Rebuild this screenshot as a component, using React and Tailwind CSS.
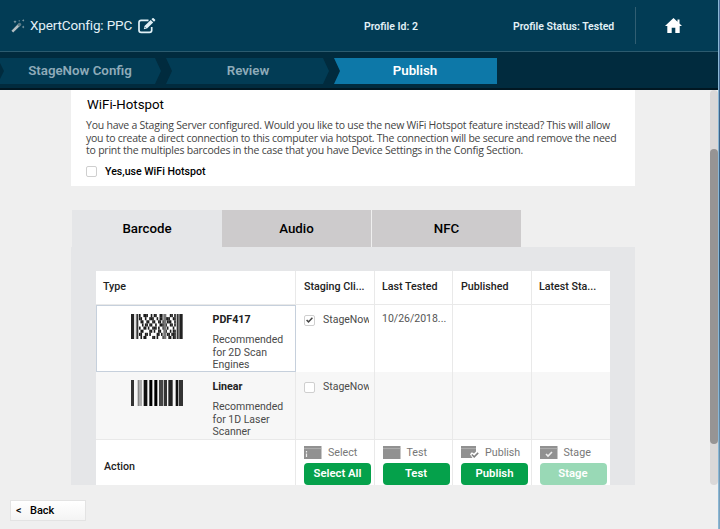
import React from "react";

function Wand() {
  return (
    <svg className="h-[14px] w-[14px]" viewBox="0 0 14 14">
      <path d="M1.3 12.6 9 5" stroke="#b4bec2" strokeWidth="2.5" />
      <path d="M7.2 6.8 9.6 4.4" stroke="#5f7c86" strokeWidth="2.5" />
      <g fill="#8fa5ad">
        <path d="M4 1.2l.5 1.1 1.1.5-1.1.5L4 4.4l-.5-1.1-1.1-.5 1.1-.5zM12.2 0l.4 1 .9.4-.9.4-.4 1-.4-1-.9-.4.9-.4zM12.2 6.6l.4 1 .9.4-.9.4-.4 1-.4-1-.9-.4.9-.4z" />
        <circle cx="8.2" cy="1.8" r=".6" />
      </g>
    </svg>
  );
}

function EditIcon() {
  return (
    <svg className="h-4 w-[18px]" viewBox="0 0 18 16" fill="none">
      <path d="M10.5 2.3H3.2A2.2 2.2 0 0 0 1 4.500v7.700A2.200 2.200 0 0 0 3.200 14.400h8.300a2.200 2.200 0 0 0 2.200-2.200V9" stroke="#e2f1f7" strokeWidth="1.700" />
      <path d="M5.800 11.300l.7-3.200 6.200-6.200 2.500 2.500L9 10.600z" fill="#e2f1f7" />
      <path d="M13.500 1.200l1-1a.8.8 0 0 1 1.100 0l1.400 1.400a.8.8 0 0 1 0 1.100l-1 1z" fill="#e2f1f7" />
      <path d="M6.800 9.100l1.200 1.200" stroke="#023c55" strokeWidth=".8" />
    </svg>
  );
}

function Home() {
  return (
    <svg className="h-[15px] w-[17px]" viewBox="0 0 17 15">
      <path d="M8.500 0 0 8h2.300v7h4.400V9.700h3.600V15h4.400V8H17l-2.500-2.400V1.500h-2v2.200z" fill="#fff" />
    </svg>
  );
}

function Chevron() {
  return (
    <svg className="block h-[26px] w-[18px] shrink-0" viewBox="0 0 18 26">
      <path d="M0 0h11l6 13-6 13H0l6-13z" fill="#012b3e" />
    </svg>
  );
}

const LINEAR = [[0, 9, "#333"], [20, 6, "#888"], [28, 4, "#888"], [38, 11, "#111"], [55, 9, "#000"], [70, 9, "#000"], [84, 12, "#444"], [98, 10, "#333"], [112, 13, "#222"], [134, 8, "#111"], [144, 12, "#333"]];

function LinearCode() {
  return (
    <svg className="block h-[26px] w-[52px]" viewBox="0 0 156 78">
      {LINEAR.map(([x, w, c]) => (
        <rect key={x} x={x} y="0" width={w} height="78" fill={c} />
      ))}
    </svg>
  );
}

const PDF_ROWS = [
  "1001110010110011010001101",
  "1100100111001011001110011",
  "0110011001100110100111001",
  "0010110110010011101001101",
  "1001101001110100110100010",
  "0110000110100110011001011",
  "1100110100001101000110111",
  "0101100001101000110011011",
];

function PdfCode() {
  return (
    <svg className="block h-[25px] w-[52px]" viewBox="0 0 156 75">
      {PDF_ROWS.map((row, y) =>
        [...row].map((b, x) =>
          b === "1" ? <rect key={x + "-" + y} x={24 + x * 4.400} y={y * 9.400} width="4.800" height="9.400" fill="#1c1c1c" /> : null
        )
      )}
      <rect x="0" width="9" height="75" fill="#222" />
      <rect x="11" width="2" height="75" fill="#999" />
      <rect x="16" width="6" height="75" fill="#333" />
      <rect x="97" width="9" height="75" fill="#777" />
      <rect x="137" width="6" height="75" fill="#333" />
      <rect x="145" width="10" height="75" fill="#222" />
    </svg>
  );
}

function WindowIcon({ kind }) {
  return (
    <svg className="h-[13px] w-[18px] shrink-0" viewBox="0 0 18 13">
      {kind === "publish" ? (
        <path d="M0 0h15v5.500l-2 2-2.200-1.300L9 8.300 11.500 12H0z" fill="#919191" />
      ) : (
        <path d="M0 0h17.500v13H0z" fill="#919191" />
      )}
      <path d={kind === "publish" ? "M0 2.600h15" : "M0 2.600h17.500"} stroke="#bdbdbd" strokeWidth=".7" />
      {kind === "select" && <path d="M2.500 5v1.500M2.500 7.500V11" stroke="#eee" strokeWidth="1.200" />}
      {kind === "publish" && <path d="M10.800 8.500l2.400 2.400 4-4" stroke="#808080" strokeWidth="1.500" fill="none" />}
      {kind === "stage" && <path d="M6 8l2 2 4-4" stroke="#eee" strokeWidth="1.600" fill="none" />}
    </svg>
  );
}

function Check({ on }) {
  return (
    <span className="flex h-[11px] w-[11px] shrink-0 items-center justify-center rounded-[2px] border border-[#cfcfcf] bg-white">
      {on && (
        <svg className="h-[6px] w-[7px]" viewBox="0 0 7 6">
          <path d="M.6 3l1.900 1.900L6.400.7" stroke="#444" strokeWidth="1.500" fill="none" />
        </svg>
      )}
    </span>
  );
}

const GRID = "grid grid-cols-[200px_78.500px_78.500px_78.500px_78.500px]";

function TypeCell({ name, lines, code }) {
  return (
    <div className="flex pl-[35px]">
      <div className="w-[81.500px] shrink-0">{code}</div>
      <div className="text-[10.500px] leading-[12.500px] text-[#4a4a4a]">
        <div className="mt-[9px] text-[10.700px] font-bold text-[#222]">{name}</div>
        <div className="mt-[7.500px]">
          {lines.map((l) => (
            <div key={l} className="whitespace-nowrap">{l}</div>
          ))}
        </div>
      </div>
    </div>
  );
}

function ClientCell({ on }) {
  return (
    <div className="flex h-[12px] items-center pl-[8px] text-[10.500px] text-[#4a4a4a]">
      <Check on={on} />
      <span className="ml-[8px] w-[46px] overflow-hidden whitespace-nowrap leading-[14px]">StageNow</span>
    </div>
  );
}

const ACTIONS = [
  ["select", "Select", "Select All"],
  ["test", "Test", "Test"],
  ["publish", "Publish", "Publish"],
  ["stage", "Stage", "Stage"],
];

export default function App() {
  return (
    <div className="flex h-[529px] w-[720px] overflow-hidden bg-[#efefef] font-[Roboto,sans-serif] text-black">
      <div className="flex w-[718px] flex-col">
        <header className="flex h-[51px] shrink-0 items-center bg-[#023c55] text-[#e2f1f7]">
          <div className="flex w-[364px] items-center pl-[11px]">
            <Wand />
            <span className="ml-[5px] mr-[6px] w-[102px] whitespace-nowrap text-[13.500px] tracking-[-0.150px]">XpertConfig: PPC</span>
            <EditIcon />
          </div>
          <div className="w-[149px] whitespace-nowrap pt-[2px] text-[10.500px] font-semibold">Profile Id: 2</div>
          <div className="w-[122px] whitespace-nowrap pt-[2px] text-[10.500px] font-semibold">Profile Status: Tested</div>
          <div className="mr-[29px] h-[37px] w-px bg-[#315e72]" />
          <Home />
        </header>
        <nav className="flex h-[39px] shrink-0 border-b-2 border-t border-b-[#011722] border-t-[#2c5b6f] bg-[#012b3e] pt-[6px] text-[13.300px] font-semibold text-[#8fabb9]">
          <div className="flex h-[26px] w-[497px] bg-[#023c55]">
            <svg className="h-[26px] w-[5px]" viewBox="0 0 5 26"><path d="M0 5l4 8-4 8z" fill="#012b3e" /></svg>
            <div className="flex w-[150px] items-center justify-center">StageNow Config</div>
            <Chevron />
            <div className="flex w-[150px] items-center justify-center">Review</div>
            <div className="flex flex-1 bg-[#0d78a8] text-white">
              <div className="bg-[linear-gradient(90deg,#023c55_50%,transparent_50%)]"><Chevron /></div>
              <div className="flex w-[148px] items-center justify-center">Publish</div>
            </div>
          </div>
        </nav>

        <div className="flex h-[395px] shrink-0">
          <main className="ml-[71px] w-[564px]">
            <section className="h-[96px] bg-white pl-[15px] pt-[7px]">
              <h2 className="pl-px text-[13.300px] leading-[16px]">WiFi-Hotspot</h2>
              <div className="mt-[6px] whitespace-nowrap font-['Open_Sans',sans-serif] text-[10.500px] leading-[12.500px] text-[#444]">
                <p className="tracking-[-0.230px]">You have a Staging Server configured. Would you like to use the new WiFi Hotspot feature instead? This will allow</p>
                <p className="tracking-[-0.255px]">you to create a direct connection to this computer via hotspot. The connection will be secure and remove the need</p>
                <p className="tracking-[-0.220px]">to print the multiples barcodes in the case that you have Device Settings in the Config Section.</p>
              </div>
              <div className="mt-[8px] flex items-center">
                <Check />
                <span className="ml-[8px] text-[10.600px] font-medium leading-[13px]">Yes,use WiFi Hotspot</span>
              </div>
            </section>

            <div className="ml-px mt-[24px] flex h-[37px] text-[13.300px] font-medium">
              <div className="flex w-[150px] items-center justify-center bg-[#e5e6e8]">Barcode</div>
              <div className="flex w-[149px] items-center justify-center bg-[#cdcbcc]">Audio</div>
              <div className="ml-px flex w-[149px] items-center justify-center bg-[#cdcbcc]">NFC</div>
            </div>

            <section className="h-[238px] bg-[#e5e6e8] pl-[25px] pt-[24px]">
              <div className="h-[214px] w-[514px] bg-white">
                <div className={GRID + " h-[34px] items-stretch divide-x divide-[#e9e9e9] border-b border-[#e9e9e9] text-[10.700px] font-medium leading-[31px] text-[#222]"}>
                  <div className="pl-[7px]">Type</div>
                  <div className="pl-[8px]">Staging Cli...</div>
                  <div className="pl-[7.500px]">Last Tested</div>
                  <div className="pl-[8px]">Published</div>
                  <div className="pl-[7.500px]">Latest Sta...</div>
                </div>
                <div className={GRID + " h-[67px] divide-x divide-[#e9e9e9]"}>
                  <div className="h-[67px] outline-1 -outline-offset-1 outline-[#c6d0dc]">
                    <TypeCell name="PDF417" lines={["Recommended", "for 2D Scan", "Engines"]} code={<div className="pt-[9px]"><PdfCode /></div>} />
                  </div>
                  <div className="pt-[9px]"><ClientCell on /></div>
                  <div className="overflow-hidden whitespace-nowrap pl-[7.500px] pt-[7px] text-[10.500px] leading-[14px] text-[#555]">10/26/2018...</div>
                  <div />
                  <div />
                </div>
                <div className={GRID + " h-[68px] divide-x divide-[#e9e9e9] border-b border-[#e9e9e9] bg-[#f7f7f7]"}>
                  <TypeCell name="Linear" lines={["Recommended", "for 1D Laser", "Scanner"]} code={<div className="pt-[8px]"><LinearCode /></div>} />
                  <div className="pt-[9px]"><ClientCell /></div>
                  <div />
                  <div />
                  <div />
                </div>
                <div className={GRID + " h-[45px] divide-x divide-[#e9e9e9]"}>
                  <div className="flex items-center pb-px pl-[8px] pt-[10px] text-[10.700px] font-medium text-[#222]">Action</div>
                  {ACTIONS.map(([kind, label, button]) => (
                    <div key={kind} className="pl-[8px] pt-[6px]">
                      <div className="flex h-[13px] items-center text-[10.700px] text-[#777]">
                        <WindowIcon kind={kind} />
                        <span className="ml-[6px] pt-[2px]">{label}</span>
                      </div>
                      <button className={"mt-[4px] block h-[22px] w-[67px] rounded-[4px] pt-px text-[11.300px] font-semibold text-white " + (kind === "stage" ? "bg-[#99d9b6]" : "bg-[#05a14b]")}>{button}</button>
                    </div>
                  ))}
                </div>
              </div>
            </section>
          </main>
          <div className="ml-[75px] h-[395px] w-[8px] rounded-full bg-[#dad8d8] pt-[59px]">
            <div className="h-[295px] rounded-full bg-[#969494]" />
          </div>
        </div>

        <footer className="pl-[10px] pt-[15px]">
          <button className="flex h-[21px] w-[76px] items-center border border-[#e3e3e3] bg-linear-to-b from-white to-[#f4f4f4] pl-[5px] pt-px text-[11px] font-medium">
            <span className="w-[14px] text-left">&lt;</span>Back
          </button>
        </footer>
      </div>
      <div className="w-[2px] border-l border-[#8bb7d5] bg-linear-to-b from-[#4b6f9b] via-[#2d5676] to-[#82a8c2]" />
    </div>
  );
}
